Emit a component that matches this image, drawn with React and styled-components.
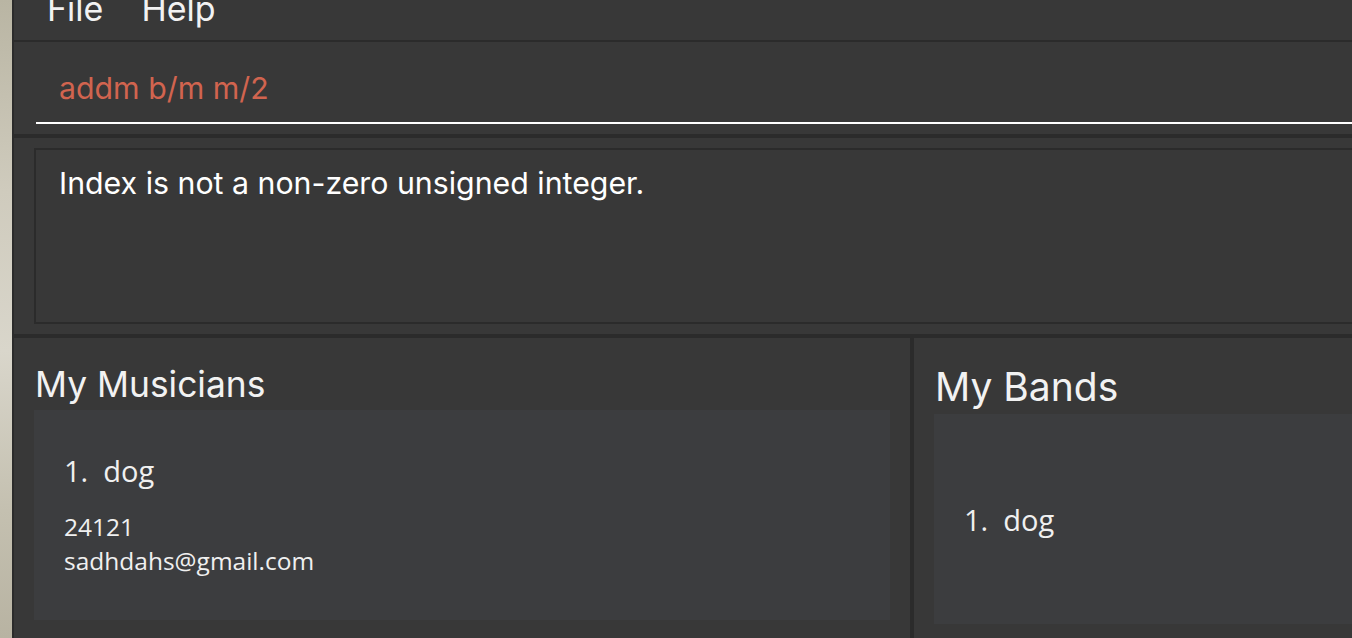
import React from 'react';
import styled, { createGlobalStyle } from 'styled-components';

const GlobalStyle = createGlobalStyle`
  html, body {
    margin: 0;
    padding: 0;
    height: 100%;
    overflow: hidden;
    background: #383838;
  }
  #root {
    height: 100%;
  }
`;

const Desktop = styled.div`
  display: flex;
  height: 638px;
  width: 1352px;
  font-family: Inter, "Open Sans", sans-serif;
`;

const Wallpaper = styled.div`
  width: 12px;
  flex-shrink: 0;
  background: linear-gradient(180deg, #b9b5a3 0%, #cfcbbd 30%, #d9d6cb 55%, #c4c0b0 80%, #b8b3a2 100%);
  border-right: 2px solid #2b2b2b;
`;

const Window = styled.div`
  flex: 1;
  display: flex;
  flex-direction: column;
  background: #383838;
  min-width: 0;
`;

const MenuBar = styled.div`
  height: 40px;
  display: flex;
  gap: 38px;
  padding-left: 33px;
  border-bottom: 2px solid #2b2b2b;
  overflow: hidden;
`;

const MenuItem = styled.span`
  color: #f2f2f2;
  font-size: 34px;
  line-height: 1;
  margin-top: -8px;
`;

const CommandArea = styled.div`
  height: 96px;
  box-sizing: border-box;
  padding-left: 22px;
  border-bottom: 4px solid #2b2b2b;
`;

const CommandInput = styled.div`
  margin-top: 24px;
  height: 56px;
  border-bottom: 2px solid #ffffff;
  padding-left: 23px;
  color: #d1644f;
  font-size: 30.3px;
  line-height: 44px;
`;

const ResultArea = styled.div`
  padding: 10px 0 10px 20px;
  border-bottom: 4px solid #2b2b2b;
`;

const ResultBox = styled.div`
  box-sizing: border-box;
  height: 176px;
  border: 2px solid #2b2b2b;
  border-right: none;
  padding: 13px 0 0 23px;
  color: #ffffff;
  font-size: 30.3px;
  line-height: 40px;
`;

const ListsRow = styled.div`
  flex: 1;
  display: flex;
  min-height: 0;
`;

const Panel = styled.div`
  width: ${(p) => p.$width || 'auto'};
  flex: ${(p) => (p.$width ? 'none' : '1')};
  box-sizing: border-box;
  padding: 0 ${(p) => (p.$last ? '0' : '20px')} 0 20px;
  border-left: ${(p) => (p.$last ? '4px solid #2b2b2b' : 'none')};
  display: flex;
  flex-direction: column;
`;

const PanelTitle = styled.div`
  color: #f2f2f2;
  font-size: ${(p) => p.$size}px;
  line-height: 1;
  height: ${(p) => p.$height}px;
  box-sizing: border-box;
  padding-top: ${(p) => p.$pad}px;
  padding-left: 1px;
`;

const Card = styled.div`
  height: 210px;
  background: #3c3d3f;
  padding: 0 30px;
  display: flex;
  flex-direction: column;
  justify-content: ${(p) => (p.$center ? 'center' : 'flex-start')};
  font-family: "Open Sans", "Noto Sans", sans-serif;
  color: #f0f0f0;
`;

const ItemName = styled.div`
  font-size: 29px;
  line-height: 1;
  white-space: pre;
  margin-top: ${(p) => p.$top || 0}px;
`;

const ItemDetail = styled.div`
  font-size: 24.5px;
  line-height: 34px;
  margin-top: ${(p) => p.$top || 0}px;
`;

export default function App() {
  return (
    <>
      <GlobalStyle />
      <Desktop>
        <Wallpaper />
        <Window>
          <MenuBar>
            <MenuItem>File</MenuItem>
            <MenuItem>Help</MenuItem>
          </MenuBar>
          <CommandArea>
            <CommandInput>addm b/m m/2</CommandInput>
          </CommandArea>
          <ResultArea>
            <ResultBox>Index is not a non-zero unsigned integer.</ResultBox>
          </ResultArea>
          <ListsRow>
            <Panel $width="896px">
              <PanelTitle $size={35.4} $height={72} $pad={29}>My Musicians</PanelTitle>
              <Card>
                <ItemName $top={46}>1.  dog</ItemName>
                <ItemDetail $top={25}>24121</ItemDetail>
                <ItemDetail>sadhdahs@gmail.com</ItemDetail>
              </Card>
            </Panel>
            <Panel $last>
              <PanelTitle $size={39} $height={76} $pad={29}>My Bands</PanelTitle>
              <Card $center>
                <ItemName>1.  dog</ItemName>
              </Card>
            </Panel>
          </ListsRow>
        </Window>
      </Desktop>
    </>
  );
}
